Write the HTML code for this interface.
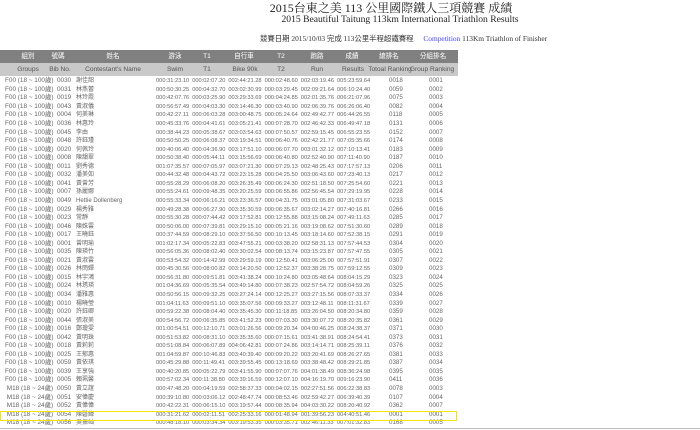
<!DOCTYPE html>
<html><head><meta charset="utf-8"><style>
*{margin:0;padding:0}
body{width:700px;height:430px;background:#fff;position:relative;overflow:hidden;font-family:"Liberation Sans","Noto Sans CJK TC",sans-serif;color:#666}
.t1{position:absolute;left:0;width:782px;top:1px;height:14px;line-height:14px;text-align:center;font-family:"Liberation Serif","Noto Serif CJK SC",serif;font-size:12px;color:#222;white-space:nowrap}
.t2{position:absolute;left:0;width:800px;top:14px;height:11px;line-height:11px;text-align:center;font-family:"Liberation Serif",serif;font-size:9.6px;color:#222;white-space:nowrap}
.dt{position:absolute;left:260px;top:34px;line-height:10px;font-family:"Liberation Serif","Noto Sans CJK TC",serif;font-size:7.4px;color:#333;white-space:nowrap}
.dt a{color:#44f;text-decoration:none;margin-left:8px}
.h1{position:absolute;left:0;top:50px;width:458px;height:13px;background:#808080;color:#fff}
.h2{position:absolute;left:0;top:63px;width:458px;height:13px;background:#c9c9c9;color:#555}
.h1 span,.h2 span{position:absolute;top:0;width:70px;margin-left:-35px;text-align:center;font-size:6.6px;line-height:13px;white-space:nowrap}
#rows{position:absolute;left:0;top:77.3px;width:460px}
.r{position:relative;height:8.55px;font-size:6.4px;line-height:8.55px;white-space:nowrap}
.r span{position:absolute;top:0}
.r span:nth-child(1){left:5px}
.r span:nth-child(2){left:57px}
.r span:nth-child(3){left:76px;font-size:6px}
.r span:nth-child(n+4){font-size:5.7px}
.r span:nth-child(4){left:156px}.r span:nth-child(5){left:192.2px}.r span:nth-child(6){left:228.4px}
.r span:nth-child(7){left:264.6px}.r span:nth-child(8){left:300.8px}.r span:nth-child(9){left:337px}
.r span:nth-child(10){left:389px;font-size:6.2px}.r span:nth-child(11){left:429px;font-size:6.2px}
.hl{position:absolute;left:0;top:411px;width:455px;height:8px;border:1.5px solid #f5e600}
.bl{position:absolute;left:0;top:428px;width:700px;height:1px;background:#bbb}
</style></head><body>
<div class="t1">2015台東之美 113 公里國際鐵人三項競賽 成績</div>
<div class="t2">2015 Beautiful Taitung 113km International Triathlon Results</div>
<div class="dt">競賽日期 2015/10/03 完成 113公里半程超鐵賽程 <a>Competition</a> 113Km Triathlon of Finisher</div>
<div class="h1"><span style="left:28px">組別</span><span style="left:58px">號碼</span><span style="left:113px">姓名</span><span style="left:175px">游泳</span><span style="left:207px">T1</span><span style="left:244px">自行車</span><span style="left:281px">T2</span><span style="left:317px">跑路</span><span style="left:352px">成績</span><span style="left:389px">總排名</span><span style="left:433px">分組排名</span></div>
<div class="h2"><span style="left:28px">Groups</span><span style="left:60px">Bib No.</span><span style="left:113px">Contestant's Name</span><span style="left:175px">Swim</span><span style="left:207px">T1</span><span style="left:245px">Bike 90k</span><span style="left:281px">T2</span><span style="left:317px">Run</span><span style="left:353px">Results</span><span style="left:390px">Totoal Ranking</span><span style="left:432px">Group Ranking</span></div>
<div id="rows">
<div class="r"><span>F00 (18 ~ 100歲)</span><span>0030</span><span>謝佳韶</span><span>000:31:23.10</span><span>000:02:07.20</span><span>002:44:21.28</span><span>000:02:48.60</span><span>002:03:19.46</span><span>005:23:59.64</span><span>0018</span><span>0001</span></div>
<div class="r"><span>F00 (18 ~ 100歲)</span><span>0031</span><span>林燕蕾</span><span>000:50:30.25</span><span>000:04:32.70</span><span>003:02:30.99</span><span>000:03:29.45</span><span>002:09:21.64</span><span>006:10:24.40</span><span>0059</span><span>0002</span></div>
<div class="r"><span>F00 (18 ~ 100歲)</span><span>0019</span><span>林玲霞</span><span>000:42:07.76</span><span>000:03:25.90</span><span>003:29:33.69</span><span>000:04:24.85</span><span>002:01:35.76</span><span>006:21:07.96</span><span>0075</span><span>0003</span></div>
<div class="r"><span>F00 (18 ~ 100歲)</span><span>0043</span><span>黃淑儀</span><span>000:56:57.49</span><span>000:04:03.30</span><span>003:14:46.30</span><span>000:03:40.90</span><span>002:06:39.76</span><span>006:26:06.40</span><span>0082</span><span>0004</span></div>
<div class="r"><span>F00 (18 ~ 100歲)</span><span>0004</span><span>何美琳</span><span>000:42:27.11</span><span>000:06:03.28</span><span>003:00:48.75</span><span>000:05:24.64</span><span>002:49:42.77</span><span>006:44:26.55</span><span>0118</span><span>0005</span></div>
<div class="r"><span>F00 (18 ~ 100歲)</span><span>0036</span><span>林惠玲</span><span>000:45:33.76</span><span>000:04:41.61</span><span>003:05:21.41</span><span>000:07:28.70</span><span>002:46:42.33</span><span>006:49:47.18</span><span>0131</span><span>0006</span></div>
<div class="r"><span>F00 (18 ~ 100歲)</span><span>0045</span><span>李由</span><span>000:38:44.23</span><span>000:05:38.67</span><span>003:03:54.63</span><span>000:07:50.57</span><span>002:59:15.45</span><span>006:55:23.55</span><span>0152</span><span>0007</span></div>
<div class="r"><span>F00 (18 ~ 100歲)</span><span>0048</span><span>許鈺瑾</span><span>000:50:50.25</span><span>000:06:08.37</span><span>003:19:34.51</span><span>000:06:40.76</span><span>002:42:21.77</span><span>007:05:35.66</span><span>0174</span><span>0008</span></div>
<div class="r"><span>F00 (18 ~ 100歲)</span><span>0020</span><span>何佩玲</span><span>000:40:06.40</span><span>000:04:36.90</span><span>003:17:51.10</span><span>000:06:07.70</span><span>003:01:32.12</span><span>007:10:13.41</span><span>0183</span><span>0009</span></div>
<div class="r"><span>F00 (18 ~ 100歲)</span><span>0008</span><span>陳韻翠</span><span>000:50:38.40</span><span>000:05:44.11</span><span>003:15:56.69</span><span>000:06:40.80</span><span>002:52:40.90</span><span>007:11:40.90</span><span>0187</span><span>0010</span></div>
<div class="r"><span>F00 (18 ~ 100歲)</span><span>0011</span><span>劉秀德</span><span>001:07:35.57</span><span>000:07:05.97</span><span>003:07:21.30</span><span>000:07:29.13</span><span>002:48:25.43</span><span>007:17:57.13</span><span>0206</span><span>0011</span></div>
<div class="r"><span>F00 (18 ~ 100歲)</span><span>0032</span><span>潘美如</span><span>000:44:32.48</span><span>000:04:43.72</span><span>003:23:15.28</span><span>000:04:25.50</span><span>003:06:43.60</span><span>007:23:40.13</span><span>0217</span><span>0012</span></div>
<div class="r"><span>F00 (18 ~ 100歲)</span><span>0041</span><span>黃曾芳</span><span>000:55:28.29</span><span>000:06:08.20</span><span>003:26:35.49</span><span>000:06:24.30</span><span>002:51:18.50</span><span>007:25:54.60</span><span>0221</span><span>0013</span></div>
<div class="r"><span>F00 (18 ~ 100歲)</span><span>0007</span><span>孫麗娜</span><span>000:55:24.61</span><span>000:09:48.35</span><span>003:20:25.59</span><span>000:06:55.86</span><span>002:56:45.54</span><span>007:29:19.95</span><span>0228</span><span>0014</span></div>
<div class="r"><span>F00 (18 ~ 100歲)</span><span>0049</span><span>Hettie Dollenberg</span><span>000:55:33.34</span><span>000:06:16.21</span><span>003:23:36.57</span><span>000:04:31.75</span><span>003:01:05.80</span><span>007:31:03.67</span><span>0233</span><span>0015</span></div>
<div class="r"><span>F00 (18 ~ 100歲)</span><span>0029</span><span>楊秀雅</span><span>000:49:28.38</span><span>000:06:27.90</span><span>003:35:30.59</span><span>000:06:35.67</span><span>003:02:14.27</span><span>007:40:16.81</span><span>0266</span><span>0016</span></div>
<div class="r"><span>F00 (18 ~ 100歲)</span><span>0023</span><span>常靜</span><span>000:55:30.28</span><span>000:07:44.42</span><span>003:17:52.81</span><span>000:12:55.88</span><span>003:15:08.24</span><span>007:49:11.63</span><span>0285</span><span>0017</span></div>
<div class="r"><span>F00 (18 ~ 100歲)</span><span>0046</span><span>陳姝雲</span><span>000:50:06.00</span><span>000:07:39.81</span><span>003:29:15.10</span><span>000:05:21.16</span><span>003:19:08.62</span><span>007:51:30.60</span><span>0289</span><span>0018</span></div>
<div class="r"><span>F00 (18 ~ 100歲)</span><span>0017</span><span>王曉鈺</span><span>000:37:44.59</span><span>000:08:29.10</span><span>003:37:56.50</span><span>000:10:13.45</span><span>003:18:14.60</span><span>007:52:38.15</span><span>0291</span><span>0019</span></div>
<div class="r"><span>F00 (18 ~ 100歲)</span><span>0001</span><span>曾明瑜</span><span>001:02:17.34</span><span>000:05:22.83</span><span>003:47:55.21</span><span>000:03:38.20</span><span>002:58:31.13</span><span>007:57:44.53</span><span>0304</span><span>0020</span></div>
<div class="r"><span>F00 (18 ~ 100歲)</span><span>0035</span><span>陳瑛竹</span><span>000:56:05.36</span><span>000:08:02.40</span><span>003:30:02.54</span><span>000:08:13.74</span><span>003:15:23.87</span><span>007:57:47.55</span><span>0305</span><span>0021</span></div>
<div class="r"><span>F00 (18 ~ 100歲)</span><span>0021</span><span>黃淑雲</span><span>000:53:54.32</span><span>000:14:42.99</span><span>003:29:59.19</span><span>000:12:50.41</span><span>003:06:25.00</span><span>007:57:51.91</span><span>0307</span><span>0022</span></div>
<div class="r"><span>F00 (18 ~ 100歲)</span><span>0026</span><span>林雨嬋</span><span>000:45:30.56</span><span>000:08:00.82</span><span>003:14:20.50</span><span>000:12:52.37</span><span>003:38:28.75</span><span>007:59:12.55</span><span>0309</span><span>0023</span></div>
<div class="r"><span>F00 (18 ~ 100歲)</span><span>0015</span><span>林宇鴻</span><span>000:56:31.80</span><span>000:09:51.81</span><span>003:41:38.24</span><span>000:10:24.80</span><span>003:05:48.64</span><span>008:04:15.29</span><span>0323</span><span>0024</span></div>
<div class="r"><span>F00 (18 ~ 100歲)</span><span>0024</span><span>林琇瑛</span><span>001:04:36.69</span><span>000:05:35.54</span><span>003:49:14.80</span><span>000:07:38.23</span><span>002:57:54.72</span><span>008:04:59.26</span><span>0325</span><span>0025</span></div>
<div class="r"><span>F00 (18 ~ 100歲)</span><span>0034</span><span>潘雅惠</span><span>000:50:56.15</span><span>000:09:32.25</span><span>003:27:24.14</span><span>000:12:25.27</span><span>003:27:15.56</span><span>008:07:33.37</span><span>0334</span><span>0026</span></div>
<div class="r"><span>F00 (18 ~ 100歲)</span><span>0010</span><span>楊曉瑩</span><span>001:04:11.63</span><span>000:09:51.10</span><span>003:35:07.56</span><span>000:09:33.27</span><span>003:12:48.11</span><span>008:11:31.67</span><span>0339</span><span>0027</span></div>
<div class="r"><span>F00 (18 ~ 100歲)</span><span>0020</span><span>許鈺卿</span><span>000:59:22.38</span><span>000:08:04.40</span><span>003:35:45.30</span><span>000:11:18.85</span><span>003:26:04.50</span><span>008:20:34.80</span><span>0359</span><span>0028</span></div>
<div class="r"><span>F00 (18 ~ 100歲)</span><span>0044</span><span>張淑美</span><span>000:54:56.72</span><span>000:06:35.85</span><span>003:41:52.23</span><span>000:07:03.30</span><span>003:30:07.72</span><span>008:20:35.82</span><span>0361</span><span>0029</span></div>
<div class="r"><span>F00 (18 ~ 100歲)</span><span>0016</span><span>鄭瓊雯</span><span>001:00:54.51</span><span>000:12:10.71</span><span>003:01:26.56</span><span>000:09:20.34</span><span>004:00:46.25</span><span>008:24:38.37</span><span>0371</span><span>0030</span></div>
<div class="r"><span>F00 (18 ~ 100歲)</span><span>0042</span><span>黃明珠</span><span>000:51:53.82</span><span>000:08:31.10</span><span>003:35:35.60</span><span>000:07:15.61</span><span>003:41:38.91</span><span>008:24:54.41</span><span>0373</span><span>0031</span></div>
<div class="r"><span>F00 (18 ~ 100歲)</span><span>0018</span><span>黃莉莉</span><span>000:51:08.84</span><span>000:06:07.89</span><span>004:06:42.81</span><span>000:07:24.86</span><span>003:14:14.71</span><span>008:25:39.11</span><span>0376</span><span>0032</span></div>
<div class="r"><span>F00 (18 ~ 100歲)</span><span>0025</span><span>王郁惠</span><span>001:04:59.87</span><span>000:10:46.83</span><span>003:40:39.40</span><span>000:09:20.22</span><span>003:20:41.69</span><span>008:26:27.65</span><span>0381</span><span>0033</span></div>
<div class="r"><span>F00 (18 ~ 100歲)</span><span>0059</span><span>黃依琪</span><span>000:45:29.88</span><span>000:11:49.41</span><span>003:39:55.45</span><span>000:13:18.69</span><span>003:38:48.42</span><span>008:29:21.85</span><span>0387</span><span>0034</span></div>
<div class="r"><span>F00 (18 ~ 100歲)</span><span>0039</span><span>王享強</span><span>000:40:20.85</span><span>000:05:22.79</span><span>003:41:55.90</span><span>000:07:07.76</span><span>004:01:38.49</span><span>008:36:24.98</span><span>0395</span><span>0035</span></div>
<div class="r"><span>F00 (18 ~ 100歲)</span><span>0005</span><span>賴珮馨</span><span>000:57:02.34</span><span>000:11:38.80</span><span>003:39:16.59</span><span>000:12:07.10</span><span>004:16:19.70</span><span>009:16:23.90</span><span>0411</span><span>0036</span></div>
<div class="r"><span>&nbsp;M18 (18 ~ 24歲)</span><span>0050</span><span>黃立誼</span><span>000:47:48.20</span><span>000:04:19.59</span><span>002:58:37.33</span><span>000:04:02.15</span><span>002:27:51.56</span><span>006:22:38.83</span><span>0078</span><span>0003</span></div>
<div class="r"><span>&nbsp;M18 (18 ~ 24歲)</span><span>0051</span><span>安偉慶</span><span>000:39:10.80</span><span>000:03:06.12</span><span>002:48:47.74</span><span>000:08:53.46</span><span>002:59:42.27</span><span>006:39:40.39</span><span>0107</span><span>0004</span></div>
<div class="r"><span>&nbsp;M18 (18 ~ 24歲)</span><span>0052</span><span>黃偉偉</span><span>000:42:22.31</span><span>000:06:15.10</span><span>003:19:57.44</span><span>000:08:35.94</span><span>004:03:30.22</span><span>008:20:40.92</span><span>0362</span><span>0007</span></div>
<div class="r"><span>&nbsp;M18 (18 ~ 24歲)</span><span>0054</span><span>陳磬緯</span><span>000:31:21.62</span><span>000:02:11.51</span><span>002:25:33.16</span><span>000:01:48.94</span><span>001:39:56.23</span><span>004:40:51.46</span><span>0001</span><span>0001</span></div>
<div class="r"><span>&nbsp;M18 (18 ~ 24歲)</span><span>0056</span><span>吳振屾</span><span>000:48:18.10</span><span>000:03:34.34</span><span>003:19:53.35</span><span>000:03:35.71</span><span>002:46:11.33</span><span>007:01:32.83</span><span>0168</span><span>0005</span></div>
</div>
<div class="hl"></div>
<div class="bl"></div>
</body></html>
